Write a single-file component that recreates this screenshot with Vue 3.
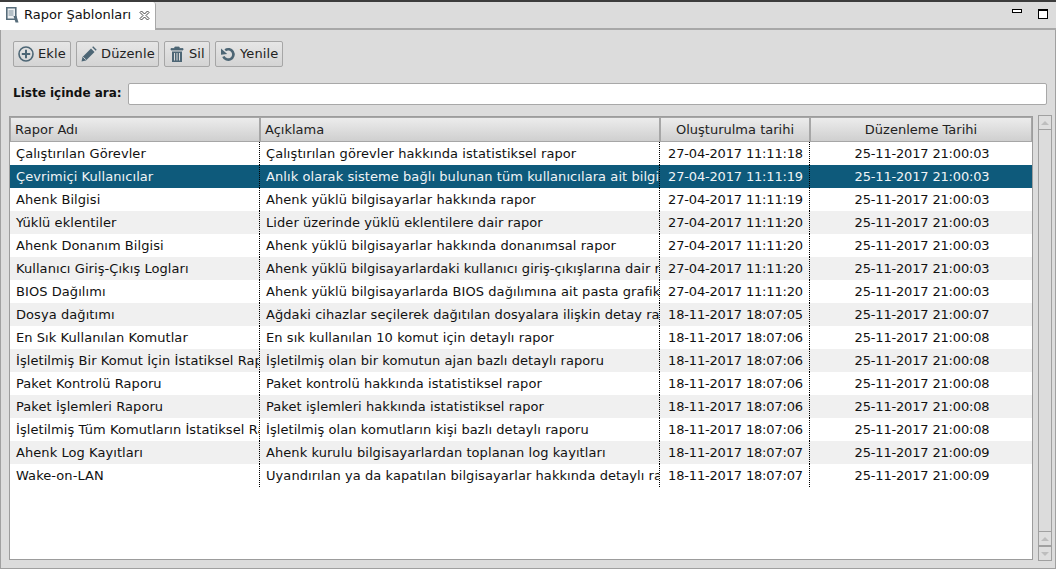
<script setup>
const rows = [
  ['Çalıştırılan Görevler', 'Çalıştırılan görevler hakkında istatistiksel rapor', '27-04-2017 11:11:18', '25-11-2017 21:00:03'],
  ['Çevrimiçi Kullanıcılar', 'Anlık olarak sisteme bağlı bulunan tüm kullanıcılara ait bilgiler', '27-04-2017 11:11:19', '25-11-2017 21:00:03'],
  ['Ahenk Bilgisi', 'Ahenk yüklü bilgisayarlar hakkında rapor', '27-04-2017 11:11:19', '25-11-2017 21:00:03'],
  ['Yüklü eklentiler', 'Lider üzerinde yüklü eklentilere dair rapor', '27-04-2017 11:11:20', '25-11-2017 21:00:03'],
  ['Ahenk Donanım Bilgisi', 'Ahenk yüklü bilgisayarlar hakkında donanımsal rapor', '27-04-2017 11:11:20', '25-11-2017 21:00:03'],
  ['Kullanıcı Giriş-Çıkış Logları', 'Ahenk yüklü bilgisayarlardaki kullanıcı giriş-çıkışlarına dair rapor', '27-04-2017 11:11:20', '25-11-2017 21:00:03'],
  ['BIOS Dağılımı', 'Ahenk yüklü bilgisayarlarda BIOS dağılımına ait pasta grafik', '27-04-2017 11:11:20', '25-11-2017 21:00:03'],
  ['Dosya dağıtımı', 'Ağdaki cihazlar seçilerek dağıtılan dosyalara ilişkin detay rapor', '18-11-2017 18:07:05', '25-11-2017 21:00:07'],
  ['En Sık Kullanılan Komutlar', 'En sık kullanılan 10 komut için detaylı rapor', '18-11-2017 18:07:06', '25-11-2017 21:00:08'],
  ['İşletilmiş Bir Komut İçin İstatiksel Rapor', 'İşletilmiş olan bir komutun ajan bazlı detaylı raporu', '18-11-2017 18:07:06', '25-11-2017 21:00:08'],
  ['Paket Kontrolü Raporu', 'Paket kontrolü hakkında istatistiksel rapor', '18-11-2017 18:07:06', '25-11-2017 21:00:08'],
  ['Paket İşlemleri Raporu', 'Paket işlemleri hakkında istatistiksel rapor', '18-11-2017 18:07:06', '25-11-2017 21:00:08'],
  ['İşletilmiş Tüm Komutların İstatiksel Raporu', 'İşletilmiş olan komutların kişi bazlı detaylı raporu', '18-11-2017 18:07:06', '25-11-2017 21:00:08'],
  ['Ahenk Log Kayıtları', 'Ahenk kurulu bilgisayarlardan toplanan log kayıtları', '18-11-2017 18:07:07', '25-11-2017 21:00:09'],
  ['Wake-on-LAN', 'Uyandırılan ya da kapatılan bilgisayarlar hakkında detaylı rapor', '18-11-2017 18:07:07', '25-11-2017 21:00:09'],
]
</script>

<template>
  <div class="window">
    <div class="tabbar">
      <div class="tab">
        <svg class="tab-icon" width="13" height="16" viewBox="0 0 13 16">
          <path d="M.8.8h9v11.4h-9z" fill="#eef1f3" stroke="#566c7a" stroke-width="1.6" />
          <path d="M2.5 4h5M2.5 6h5M2.5 8h5" stroke="#7d909c" />
          <path d="M7.5 9h3l2 6.5h-3z" fill="#566c7a" />
        </svg>
        <span class="tab-label">Rapor Şablonları</span>
        <svg class="tab-close" width="11" height="11" viewBox="0 0 11 11">
          <path d="M1 2.5 2.5 1 5.5 4 8.5 1 10 2.5 7 5.5 10 8.5 8.5 10 5.5 7 2.5 10 1 8.5 4 5.5Z" fill="#fff" stroke="#444" />
        </svg>
      </div>
      <div class="tab-controls">
        <span class="ctl-min"></span>
        <span class="ctl-max"></span>
      </div>
    </div>

    <div class="body">
      <div class="toolbar">
        <button class="btn btn-add">
          <svg width="16" height="16" viewBox="0 0 16 16">
            <circle cx="8" cy="8" r="7" fill="none" stroke="#4d6675" stroke-width="1.6" />
            <path d="M8 3.8v8.4M3.8 8h8.4" stroke="#4d6675" stroke-width="2" />
          </svg>
          <span class="btn-text">Ekle</span>
        </button>
        <button class="btn btn-edit">
          <svg width="16" height="16" viewBox="0 0 16 16">
            <path d="M0.5 15.5l1-4.5L10 2.5 13.5 6 5 14.5z" fill="#4d6675" />
            <path d="M11.2 1.3l1-1 3.5 3.5-1 1z" fill="#4d6675" />
            <path d="M2.3 11.2l2.5 2.5" stroke="#dcdcdc" />
          </svg>
          <span class="btn-text">Düzenle</span>
        </button>
        <button class="btn btn-del">
          <svg width="16" height="16" viewBox="0 0 16 16">
            <path d="M2 2.5h12V4H2zM5.8 2.5V1h4.4v1.5" fill="#4d6675" stroke="#4d6675" stroke-width=".8" />
            <path d="M3 5.5h10V16H3z" fill="#4d6675" />
            <path d="M5.5 7v7.5M8 7v7.5M10.5 7v7.5" stroke="#dcdcdc" />
          </svg>
          <span class="btn-text">Sil</span>
        </button>
        <button class="btn btn-reload">
          <svg width="16" height="16" viewBox="0 0 16 16">
            <path d="M5.2 4.2A5.2 5.2 0 1 1 3.4 10.4" fill="none" stroke="#4d6675" stroke-width="2.6" />
            <path d="M1 2.6 7.2 8 1 8.8z" fill="#4d6675" />
          </svg>
          <span class="btn-text">Yenile</span>
        </button>
      </div>

      <div class="search">
        <label class="search-label">Liste içinde ara:</label>
        <input class="search-input" type="text" />
      </div>

      <div class="table-wrap">
        <div class="table">
          <div class="thead">
            <div class="th left">Rapor Adı</div>
            <div class="th left">Açıklama</div>
            <div class="th">Oluşturulma tarihi</div>
            <div class="th last">Düzenleme Tarihi</div>
          </div>
          <div class="tbody">
            <div
              v-for="(r, i) in rows"
              :key="i"
              class="tr"
              :class="{ odd: i % 2 === 1, selected: i === 1 }"
            >
              <div class="td">{{ r[0] }}</div>
              <div class="td">{{ r[1] }}</div>
              <div class="td date">{{ r[2] }}</div>
              <div class="td date last">{{ r[3] }}</div>
            </div>
          </div>
        </div>

        <div class="scrollbar">
          <div class="sb-btn"><span class="arrow-up"></span></div>
          <div class="sb-thumb"></div>
          <div class="sb-btn"><span class="arrow-up"></span></div>
          <div class="sb-btn"><span class="arrow-down"></span></div>
        </div>
      </div>
    </div>
  </div>
</template>

<style>
html, body {
  margin: 0;
  background: #dcdcdc;
  overflow: hidden;
}
</style>

<style scoped>
.window {
  width: 1056px;
  height: 569px;
  box-sizing: border-box;
  background: #dcdcdc;
  border-top: 2px solid #3c3c3c;
  border-bottom: 1px solid #a0a0a0;
  font-family: "DejaVu Sans", sans-serif;
  font-size: 13px;
  color: #111;
  display: flex;
  flex-direction: column;
  overflow: hidden;
}

.tabbar {
  height: 28px;
  flex: none;
  box-sizing: border-box;
  border-bottom: 2px solid #a8a8a8;
  display: flex;
  justify-content: space-between;
}
.tab {
  width: 156px;
  height: 28px;
  box-sizing: border-box;
  background: #fff;
  border-right: 1px solid #a8a8a8;
  border-top-right-radius: 3px;
  display: flex;
  align-items: center;
  padding: 0 0 2px 6px;
}
.tab-label {
  margin: 0 0 2px 5px;
  white-space: nowrap;
}
.tab-close {
  margin-left: 8px;
}
.tab-controls {
  display: flex;
  align-items: flex-start;
  padding: 7px 8px 0 0;
  gap: 16px;
}
.ctl-min {
  width: 10px;
  height: 4px;
  box-sizing: border-box;
  background: #fff;
  border: 1px solid #000;
}
.ctl-max {
  width: 10px;
  height: 10px;
  box-sizing: border-box;
  background: #fff;
  border: 1px solid #000;
  border-top-width: 2px;
}

.body {
  flex: 1;
  min-height: 0;
  box-sizing: border-box;
  border-left: 1px solid #a0a0a0;
  border-right: 1px solid #a0a0a0;
  padding: 11px 3px 8px 2px;
  display: flex;
  flex-direction: column;
}

.toolbar {
  display: flex;
  gap: 5px;
  padding-left: 10px;
  height: 26px;
}
.btn {
  height: 26px;
  box-sizing: border-box;
  padding: 0 0 0 4px;
  display: flex;
  align-items: center;
  gap: 4px;
  font: inherit;
  letter-spacing: 0.12px;
  color: #222;
  background: linear-gradient(#e6e6e6, #d4d4d4);
  border: 1px solid #a6a6a6;
  border-radius: 2px;
  white-space: nowrap;
}
.btn-text {
  margin-bottom: 2px;
}
.btn-add { width: 58px; }
.btn-edit { width: 83px; }
.btn-del { width: 46px; }
.btn-reload { width: 68px; }

.search {
  display: flex;
  align-items: center;
  gap: 6px;
  margin-top: 16px;
  padding-left: 10px;
}
.search-label {
  font-size: 12px;
  font-weight: 700;
  white-space: nowrap;
  margin-bottom: 3px;
}
.search-input {
  flex: 1;
  min-width: 0;
  height: 22px;
  box-sizing: border-box;
  background: #fff;
  border: 1px solid #a8a8a8;
  border-radius: 2px;
  margin-right: 5px;
}

.table-wrap {
  flex: 1;
  min-height: 0;
  display: flex;
  margin-top: 11px;
  padding-left: 6px;
  gap: 5px;
}
.table {
  width: 1024px;
  box-sizing: border-box;
  background: #fff;
  border: 1px solid #9c9c9c;
  display: flex;
  flex-direction: column;
  overflow: hidden;
}
.thead {
  display: grid;
  grid-template-columns: 250px 400px 150px 222px;
  height: 25px;
  flex: none;
}
.th {
  box-sizing: border-box;
  display: flex;
  align-items: center;
  justify-content: center;
  padding-bottom: 1px;
  background: linear-gradient(#ececec, #cfcfcf);
  border: 1px solid #a6a6a6;
  color: #222;
}
.th.left {
  justify-content: flex-start;
  padding-left: 4px;
}
.tr {
  display: grid;
  grid-template-columns: 250px 400px 150px 222px;
  height: 23px;
}
.tr.odd {
  background: #f0f0f0;
}
.tr.selected {
  background: #0e5a7b;
  color: #f0f4f6;
}
.td {
  box-sizing: border-box;
  padding-left: 6px;
  line-height: 23px;
  letter-spacing: 0.07px;
  white-space: nowrap;
  overflow: hidden;
  border-right: 1px dotted #000;
}
.td.date {
  padding-left: 2px;
  text-align: center;
  letter-spacing: -0.17px;
}
.td.last {
  padding-left: 2px;
  border-right: none;
}

.scrollbar {
  width: 14px;
  margin-top: -1px;
  margin-bottom: -1px;
  display: flex;
  flex-direction: column;
  flex: none;
}
.sb-btn {
  height: 15px;
  flex: none;
  box-sizing: border-box;
  background: #dedede;
  border: 1px solid #a0a0a0;
  display: flex;
  align-items: center;
  justify-content: center;
}
.sb-thumb {
  flex: 1;
  box-sizing: border-box;
  background: #dcdcdc;
  border: 1px solid #a0a0a0;
  border-width: 0 1px;
}
.arrow-up {
  width: 0;
  height: 0;
  border-left: 4px solid transparent;
  border-right: 4px solid transparent;
  border-bottom: 4px solid #bdbdbd;
}
.arrow-down {
  width: 0;
  height: 0;
  border-left: 4px solid transparent;
  border-right: 4px solid transparent;
  border-top: 4px solid #bdbdbd;
}
</style>
